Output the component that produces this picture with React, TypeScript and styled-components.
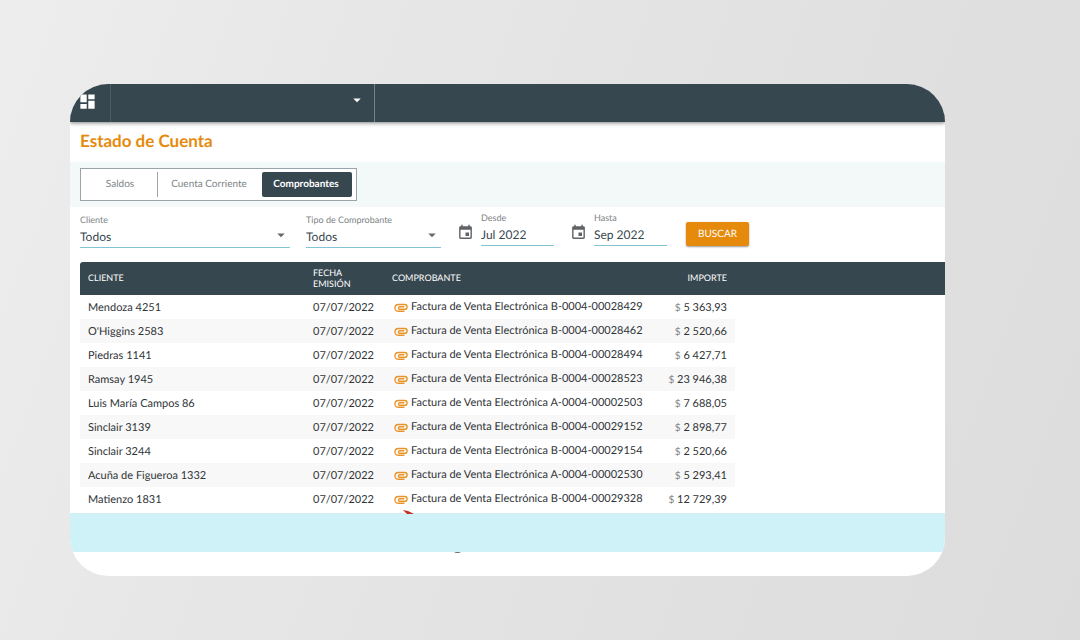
import React from "react";
import styled, { createGlobalStyle, css } from "styled-components";
import { MdArrowDropDown, MdDashboard, MdEvent } from "react-icons/md";

const GlobalStyle = createGlobalStyle`
  *, *::before, *::after { box-sizing: border-box; }
  body {
    margin: 0;
    min-height: 100vh;
    font-family: Lato, "Open Sans", sans-serif;
    text-rendering: geometricPrecision;
    color: #303437;
    background: linear-gradient(110deg, #ededed 0%, #e4e4e4 45%, #dcdcdc 100%);
  }
  button, select, input { font-family: inherit; text-rendering: inherit; }
`;

const Page = styled.div`
  padding: 84px 135px 64px 70px;
`;

const Card = styled.main`
  background: #fff;
  border-radius: 38px;
  overflow: hidden;
`;

const TopBar = styled.header`
  display: flex;
  align-items: stretch;
  height: 38px;
  background: #37474f;
  box-shadow: 0 1px 4px rgba(0, 0, 0, 0.5);
  position: relative;
`;

const AppsButton = styled.button`
  display: flex;
  align-items: center;
  width: 41px;
  padding: 0 0 4px 8px;
  border: 0;
  border-right: 1px solid #4d5b62;
  background: none;
  color: #fff;
  font-size: 19px;
`;

const AccountButton = styled.button`
  display: flex;
  align-items: center;
  justify-content: flex-end;
  width: 264px;
  padding: 0 8px 6px;
  border: 0;
  border-right: 1px solid #74818a;
  background: none;
  color: #fff;
  font-size: 18px;
`;

const Title = styled.h1`
  margin: 0;
  padding: 8px 10px 10px;
  font-size: 17px;
  line-height: 22px;
  font-weight: 700;
  color: #e68a0c;
`;

const TabBand = styled.nav`
  display: flex;
  padding: 6px 10px;
  background: #f3f8f9;
`;

const TabGroup = styled.div`
  display: flex;
  height: 33px;
  padding: 3px 4px;
  border: 1px solid #9aa4a9;
  background: #fff;
`;

const Tab = styled.button<{ $active?: boolean; $width: number }>`
  width: ${(p) => p.$width}px;
  padding: 0 2px 2px 0;
  border: 0;
  border-radius: ${(p) => (p.$active ? "2px" : "0")};
  background: ${(p) => (p.$active ? "#37474f" : "none")};
  color: ${(p) => (p.$active ? "#fff" : "#7d8386")};
  font-size: 10px;
  font-weight: ${(p) => (p.$active ? 700 : 400)};
  &:nth-child(2) { border-left: 1px solid #9aa4a9; }
`;

const Filters = styled.form`
  display: flex;
  align-items: flex-start;
  padding: 5px 10px 14px;
`;

const Field = styled.div<{ $width: number; $gap: number; $raised?: boolean }>`
  display: flex;
  flex-direction: column;
  position: relative;
  width: ${(p) => p.$width}px;
  margin-right: ${(p) => p.$gap}px;
  padding-top: ${(p) => (p.$raised ? 0 : 2)}px;
  border-bottom: 1px solid #83c3d6;
`;

const FieldLabel = styled.label`
  font-size: 9px;
  line-height: 12px;
  color: #7d8386;
`;

const controlStyle = css`
  appearance: none;
  width: 100%;
  height: 21px;
  margin: 0;
  padding: 0 0 1px;
  border: 0;
  border-radius: 0;
  background: none;
  color: #37474f;
  font-size: 12px;
  outline: none;
`;

const Select = styled.select`
  ${controlStyle}
`;

const DateInput = styled.input`
  ${controlStyle}
`;

const SelectArrow = styled(MdArrowDropDown)`
  position: absolute;
  right: 0;
  bottom: 3px;
  font-size: 18px;
  color: #66696b;
  pointer-events: none;
`;

const CalendarIcon = styled(MdEvent)`
  flex: none;
  margin: 12px 7px 0 0;
  font-size: 17px;
  color: #5f6366;
`;

const SearchButton = styled.button`
  width: 63px;
  height: 24px;
  margin-top: 10px;
  padding: 0;
  border: 0;
  border-radius: 2px;
  background: #e68a0c;
  box-shadow: 0 1px 2px rgba(0, 0, 0, 0.4);
  color: #fff;
  font-size: 10px;
`;

const TableWrap = styled.div`
  padding-left: 10px;
`;

const Table = styled.table`
  width: 100%;
  table-layout: fixed;
  border-collapse: separate;
  border-spacing: 0;
`;

const HeadCell = styled.th<{ $width?: number; $right?: boolean }>`
  width: ${(p) => (p.$width ? p.$width + "px" : "auto")};
  height: 33px;
  padding: 0 8px 2px;
  background: #37474f;
  color: #fff;
  font-size: 9px;
  line-height: 11px;
  font-weight: 400;
  text-align: ${(p) => (p.$right ? "right" : "left")};
  &:first-child { border-top-left-radius: 3px; }
`;

const Row = styled.tr`
  &:nth-child(even) td:not(:last-child) { background: #f8f8f8; }
`;

const Cell = styled.td<{ $right?: boolean }>`
  height: 24px;
  padding: 2px 8px 0;
  font-size: 11px;
  line-height: 16px;
  text-align: ${(p) => (p.$right ? "right" : "left")};
  white-space: nowrap;
`;

const Voucher = styled.a`
  display: flex;
  align-items: center;
  gap: 3px;
  padding: 0 0 2px 2px;
  color: inherit;
  text-decoration: none;
`;

const ClipSvg = styled.svg`
  flex: none;
  width: 14px;
  height: 10px;
  margin-top: 2px;
  fill: none;
  stroke: #e8942a;
  stroke-linecap: round;
`;

const Currency = styled.span`
  color: #7d8386;
  font-size: 10px;
`;

const Notice = styled.div`
  position: relative;
  height: 39px;
  margin-top: 2px;
  background: #cff2f9;
  border-top: 1px solid #d5eef4;
`;

const PointerTip = styled.svg`
  position: absolute;
  left: 333px;
  bottom: 100%;
  width: 11px;
  height: 4px;
`;

const LowerMark = styled.svg`
  position: absolute;
  left: 384px;
  top: 100%;
  width: 7px;
  height: 1px;
`;

const Footer = styled.footer`
  height: 24px;
`;

const ClipIcon = () => (
  <ClipSvg viewBox="0 0 14 10" aria-hidden="true">
    <path
      d="M10 8.3H4.4A3.4 3.4 0 0 1 4.4 1.5H10.7A2.4 2.4 0 0 1 10.7 6.3H5.3A1.3 1.3 0 0 1 5.3 3.8H9.8"
      strokeWidth="1.4"
    />
  </ClipSvg>
);

const rows = [
  ["Mendoza 4251", "B-0004-00028429", "5 363,93"],
  ["O'Higgins 2583", "B-0004-00028462", "2 520,66"],
  ["Piedras 1141", "B-0004-00028494", "6 427,71"],
  ["Ramsay 1945", "B-0004-00028523", "23 946,38"],
  ["Luis María Campos 86", "A-0004-00002503", "7 688,05"],
  ["Sinclair 3139", "B-0004-00029152", "2 898,77"],
  ["Sinclair 3244", "B-0004-00029154", "2 520,66"],
  ["Acuña de Figueroa 1332", "A-0004-00002530", "5 293,41"],
  ["Matienzo 1831", "B-0004-00029328", "12 729,39"],
];

export default function App() {
  return (
    <Page>
      <GlobalStyle />
      <Card>
        <TopBar>
          <AppsButton type="button" aria-label="Panel"><MdDashboard /></AppsButton>
          <AccountButton type="button" aria-label="Cuenta"><MdArrowDropDown /></AccountButton>
        </TopBar>
        <Title>Estado de Cuenta</Title>
        <TabBand>
          <TabGroup>
            <Tab type="button" $width={72}>Saldos</Tab>
            <Tab type="button" $width={105}>Cuenta Corriente</Tab>
            <Tab type="button" $width={90} $active>Comprobantes</Tab>
          </TabGroup>
        </TabBand>
        <Filters onSubmit={(e) => e.preventDefault()}>
          <Field $width={210} $gap={16}>
            <FieldLabel htmlFor="cliente">Cliente</FieldLabel>
            <Select id="cliente"><option>Todos</option></Select>
            <SelectArrow />
          </Field>
          <Field $width={135} $gap={16}>
            <FieldLabel htmlFor="tipo">Tipo de Comprobante</FieldLabel>
            <Select id="tipo"><option>Todos</option></Select>
            <SelectArrow />
          </Field>
          <CalendarIcon />
          <Field $width={73} $gap={16} $raised>
            <FieldLabel htmlFor="desde">Desde</FieldLabel>
            <DateInput id="desde" defaultValue="Jul 2022" />
          </Field>
          <CalendarIcon />
          <Field $width={73} $gap={19} $raised>
            <FieldLabel htmlFor="hasta">Hasta</FieldLabel>
            <DateInput id="hasta" defaultValue="Sep 2022" />
          </Field>
          <SearchButton>BUSCAR</SearchButton>
        </Filters>
        <TableWrap>
          <Table>
            <thead>
              <tr>
                <HeadCell $width={225}>CLIENTE</HeadCell>
                <HeadCell $width={79}>FECHA<br />EMISIÓN</HeadCell>
                <HeadCell $width={265}>COMPROBANTE</HeadCell>
                <HeadCell $width={86} $right>IMPORTE</HeadCell>
                <HeadCell />
              </tr>
            </thead>
            <tbody>
              {rows.map(([client, number, amount]) => (
                <Row key={number}>
                  <Cell>{client}</Cell>
                  <Cell>07/07/2022</Cell>
                  <Cell><Voucher href="#"><ClipIcon />Factura de Venta Electrónica {number}</Voucher></Cell>
                  <Cell $right><Currency>$</Currency> {amount}</Cell>
                  <Cell />
                </Row>
              ))}
            </tbody>
          </Table>
        </TableWrap>
        <Notice>
          <PointerTip viewBox="0 0 11 4" aria-hidden="true">
            <path d="M0 0 L5 1 L11 4 L4 4 Z" fill="#c62f22" />
          </PointerTip>
          <LowerMark viewBox="0 0 7 1" aria-hidden="true">
            <path d="M0 0 H7 L5 1 H2 Z" fill="#6d7477" />
          </LowerMark>
        </Notice>
        <Footer />
      </Card>
    </Page>
  );
}
